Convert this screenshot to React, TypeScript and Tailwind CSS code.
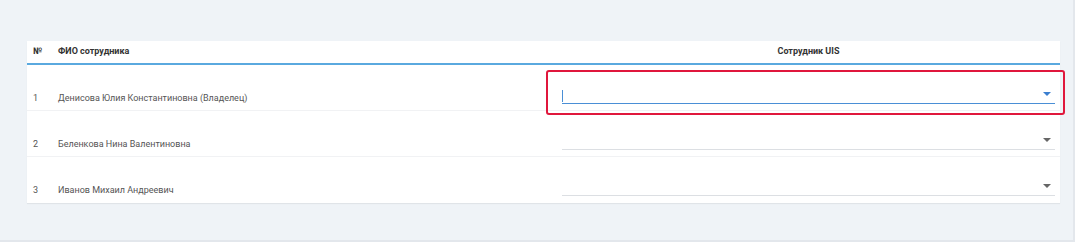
import React from "react";

const rows = [
  { n: 1, name: "Денисова Юлия Константиновна (Владелец)", focused: true },
  { n: 2, name: "Беленкова Нина Валентиновна", focused: false },
  { n: 3, name: "Иванов Михаил Андреевич", focused: false },
];

function Arrow({ color }: { color: string }) {
  return (
    <svg width="8" height="4" viewBox="0 0 8 4" className="block">
      <path d="M0 0 L8 0 L4 4 Z" fill={color} />
    </svg>
  );
}

export default function App() {
  return (
    <div
      className="w-[1075px] h-[242px] bg-[#eff3f7] border-r-2 border-b-2 border-[#e3e7ec] pt-[41px] pl-[27px]"
      style={{ fontFamily: "Roboto, 'Noto Sans', sans-serif" }}
    >
      <div className="w-[1033px] bg-white shadow-[0_1px_1px_rgba(0,0,0,0.06)] relative">
        <div className="grid grid-cols-[25px_496px_1fr] h-[24px] items-center border-b-2 border-[#5aa9df] text-[9px] font-bold text-[#333]">
          <div className="pl-[6px]">№</div>
          <div className="pl-[6px]">ФИО сотрудника</div>
          <div className="text-center pl-[14px] pr-[5px]">Сотрудник UIS</div>
        </div>
        {rows.map((r, i) => (
          <div
            key={r.n}
            className={`grid grid-cols-[25px_496px_1fr] h-[46px] text-[9px] text-[#555] ${
              i < rows.length - 1 ? "border-b border-[#f1f2f4]" : ""
            }`}
          >
            <div className="pl-[6px] pt-[27px]">{r.n}</div>
            <div className="pl-[6px] pt-[27px]">{r.name}</div>
            <div className="pl-[14px] pr-[5px] pt-[22px]">
              <div
                className={`h-[17px] flex items-center justify-between border-b ${
                  r.focused ? "border-[#4a8fd6]" : "border-[#dcdfe3]"
                }`}
              >
                {r.focused ? (
                  <div className="w-px h-[12px] bg-[#4a8fd6] mt-[1px]" />
                ) : (
                  <div />
                )}
                <div className="pr-[4px] mb-[3px]">
                  <Arrow color={r.focused ? "#3b7fcf" : "#666"} />
                </div>
              </div>
            </div>
          </div>
        ))}
        <div className="absolute left-[519px] top-[29px] w-[519px] h-[45px] border-2 border-[#e0173c] rounded-[3px] pointer-events-none" />
      </div>
    </div>
  );
}
